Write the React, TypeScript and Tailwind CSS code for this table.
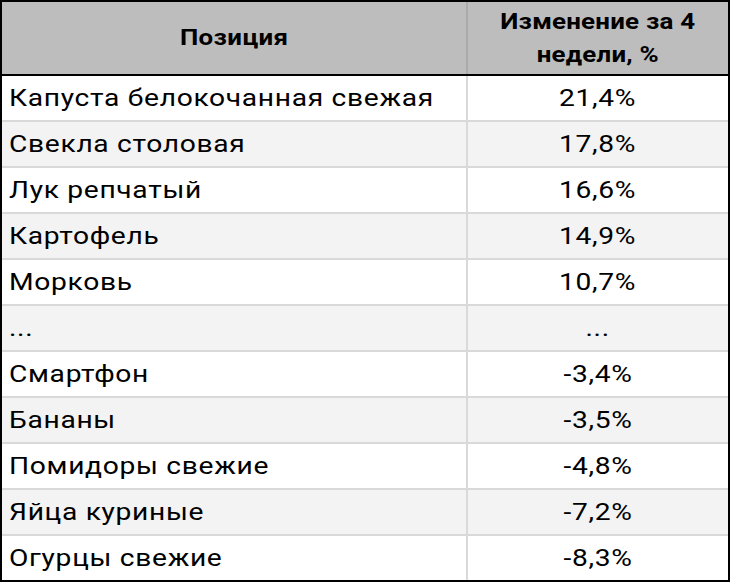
import React from "react";

const rows: [string, string][] = [
  ["Капуста белокочанная свежая", "21,4%"],
  ["Свекла столовая", "17,8%"],
  ["Лук репчатый", "16,6%"],
  ["Картофель", "14,9%"],
  ["Морковь", "10,7%"],
  ["...", "..."],
  ["Смартфон", "-3,4%"],
  ["Бананы", "-3,5%"],
  ["Помидоры свежие", "-4,8%"],
  ["Яйца куриные", "-7,2%"],
  ["Огурцы свежие", "-8,3%"],
];

export default function App() {
  return (
    <div className="w-[730px] h-[582px] border-2 border-black bg-white text-black font-['Roboto',sans-serif] flex flex-col overflow-hidden">
      <div className="flex h-[74px] shrink-0 bg-[#bdbdbd] border-b-2 border-black font-bold text-[22.5px]">
        <div className="w-[466px] shrink-0 border-r-2 border-[#aaaaaa] flex items-center justify-center">
          <span className="inline-block scale-x-[1.15] tracking-[0.35px] whitespace-nowrap">Позиция</span>
        </div>
        <div className="flex-1 flex items-center justify-center text-center leading-[33px]">
          <span className="inline-block scale-x-[1.15] tracking-[0.2px] whitespace-nowrap">
            Изменение за 4
            <br />
            недели, %
          </span>
        </div>
      </div>
      {rows.map(([name, val], i) => {
        const last = i === rows.length - 1;
        const even = i % 2 === 1;
        return (
          <div
            key={i}
            className={
              "flex shrink-0 text-[24.5px] " +
              (last ? "h-[44px] " : "h-[46px] border-b-2 border-[#d9d9d9] ") +
              (even ? "bg-[#f3f3f3]" : "bg-white")
            }
          >
            <div className="w-[466px] shrink-0 border-r-2 border-[#d9d9d9] flex items-center pl-[7px]">
              <span className="inline-block origin-left scale-x-[1.15] tracking-[0.6px] whitespace-nowrap">{name}</span>
            </div>
            <div className="flex-1 flex items-center justify-center">
              <span className="inline-block scale-x-[1.15] tracking-[0.6px] whitespace-nowrap">{val}</span>
            </div>
          </div>
        );
      })}
    </div>
  );
}
